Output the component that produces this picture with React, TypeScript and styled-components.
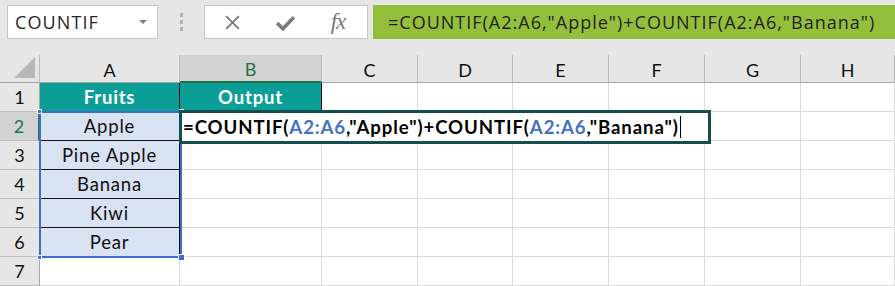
import React from 'react'
import styled, { createGlobalStyle } from 'styled-components'

const GlobalStyle = createGlobalStyle`
  * { box-sizing: border-box; }
  body {
    margin: 0;
    background: #ffffff;
    font-family: Lato, "Noto Sans", sans-serif;
  }
`

const Page = styled.div`
  width: 895px;
  height: 286px;
  overflow: hidden;
  background: #ffffff;
`

const Toolbar = styled.div`
  height: 55px;
  background: #e6e6e6;
  display: flex;
  align-items: flex-start;
  padding: 5px 0 0 7px;
`

const NameBox = styled.div`
  width: 151px;
  height: 34px;
  background: #ffffff;
  border: 1px solid #c6c6c6;
  display: flex;
  align-items: center;
  justify-content: space-between;
  padding: 0 10px 0 7px;
  font-family: "Open Sans", "Noto Sans", sans-serif;
  font-size: 18px;
  letter-spacing: 1.1px;
  color: #262626;
`

const Caret = styled.span`
  width: 0;
  height: 0;
  border-left: 4px solid transparent;
  border-right: 4px solid transparent;
  border-top: 4px solid #808080;
`

const Handle = styled.div`
  width: 46px;
  height: 34px;
  display: flex;
  flex-direction: column;
  align-items: center;
  justify-content: center;
  gap: 3px;
`

const Dot = styled.span`
  width: 3px;
  height: 4px;
  background: #b4b4b4;
`

const ButtonBox = styled.div`
  width: 164px;
  height: 34px;
  background: #ffffff;
  border: 1px solid #c6c6c6;
  display: flex;
  align-items: center;
  justify-content: space-between;
  padding: 0 16px 0 14px;
`

const IconSlot = styled.span`
  width: 26px;
  display: flex;
  align-items: center;
  justify-content: center;
  color: #7a7a7a;
`

const Fx = styled.span`
  font-family: "Liberation Serif", "DejaVu Serif", serif;
  font-style: italic;
  font-size: 23px;
  color: #7a7a7a;
  letter-spacing: -1px;
`

const FormulaBar = styled.div`
  flex: 1;
  height: 34px;
  margin-left: 5px;
  background: #93bf3b;
  display: flex;
  align-items: center;
  padding-left: 15px;
  font-family: "Open Sans", "Noto Sans", sans-serif;
  font-size: 18px;
  letter-spacing: 1px;
  color: #1f1f1f;
  white-space: nowrap;
  overflow: hidden;
`

const Sheet = styled.div`
  position: relative;
  display: grid;
  grid-template-columns: 40px 140px 142px 96px 95px 96px 96px 96px 94px;
  grid-template-rows: 28px repeat(7, 29px);
`

const Corner = styled.div`
  background: #e6e6e6;
  border-right: 1px solid #bdbdbd;
  border-bottom: 1px solid #a6a6a6;
  position: relative;
  &::after {
    content: '';
    position: absolute;
    right: 4px;
    bottom: 4px;
    border-left: 21px solid transparent;
    border-bottom: 21px solid #b8b8b8;
  }
`

const ColHead = styled.div<{ $active?: boolean }>`
  background: ${p => (p.$active ? '#d2d2d2' : '#e6e6e6')};
  color: ${p => (p.$active ? '#217346' : '#111111')};
  border-right: 1px solid #bdbdbd;
  border-bottom: ${p => (p.$active ? '2px solid #217346' : '1px solid #a6a6a6')};
  display: flex;
  align-items: center;
  justify-content: center;
  font-size: 18px;
  padding-top: 2px;
`

const RowHead = styled.div<{ $active?: boolean }>`
  background: ${p => (p.$active ? '#d2d2d2' : '#e6e6e6')};
  color: ${p => (p.$active ? '#217346' : '#111111')};
  border-right: ${p => (p.$active ? '2px solid #217346' : '1px solid #a6a6a6')};
  border-bottom: 1px solid #bdbdbd;
  display: flex;
  align-items: center;
  justify-content: center;
  font-size: 18px;
`

const Cell = styled.div<{ $kind?: 'head' | 'data' | 'plain' }>`
  background: ${p =>
    p.$kind === 'head' ? '#0a9e97' : p.$kind === 'data' ? '#d9e2f3' : '#ffffff'};
  color: ${p => (p.$kind === 'head' ? '#ffffff' : '#111111')};
  font-weight: ${p => (p.$kind === 'head' ? 700 : 400)};
  border-right: 1px solid ${p => (p.$kind === 'plain' ? '#dadada' : '#111111')};
  border-bottom: 1px solid ${p => (p.$kind === 'data' ? '#111111' : p.$kind === 'head' ? '#0a9e97' : '#dadada')};
  display: flex;
  align-items: center;
  justify-content: center;
  font-size: 18.5px;
  letter-spacing: 0.8px;
  white-space: nowrap;
`

const Selection = styled.div`
  position: absolute;
  left: 39px;
  top: 56px;
  width: 143px;
  height: 147px;
  border: 2px solid #3c6fcd;
  pointer-events: none;
`

const Knob = styled.span<{ $x: 'l' | 'r'; $y: 't' | 'b'; $big?: boolean }>`
  position: absolute;
  width: ${p => (p.$big ? 7 : 5)}px;
  height: ${p => (p.$big ? 7 : 5)}px;
  background: #3c6fcd;
  border: 1px solid #ffffff;
  ${p => (p.$x === 'l' ? 'left: -4px;' : `right: ${p.$big ? -5 : -4}px;`)}
  ${p => (p.$y === 't' ? 'top: -4px;' : `bottom: ${p.$big ? -5 : -4}px;`)}
`

const EditBox = styled.div`
  position: absolute;
  left: 179px;
  top: 55px;
  width: 532px;
  height: 34px;
  background: #ffffff;
  border: 3px solid #134f4f;
  display: flex;
  align-items: center;
  padding-left: 1px;
  font-size: 18.6px;
  font-weight: 700;
  letter-spacing: 0.9px;
  color: #000000;
  white-space: nowrap;
  z-index: 2;
`

const Ref = styled.span`
  color: #4472c4;
`

const Cursor = styled.span`
  display: inline-block;
  width: 1px;
  height: 22px;
  background: #000000;
  margin-left: 1px;
  vertical-align: middle;
`

const columns = ['A', 'B', 'C', 'D', 'E', 'F', 'G', 'H']
const fruits = ['Apple', 'Pine Apple', 'Banana', 'Kiwi', 'Pear']

const App = () => {
  const rows = [1, 2, 3, 4, 5, 6, 7]

  return (
    <Page>
      <GlobalStyle />
      <Toolbar>
        <NameBox>
          COUNTIF
          <Caret />
        </NameBox>
        <Handle>
          <Dot />
          <Dot />
          <Dot />
        </Handle>
        <ButtonBox>
          <IconSlot>
            <svg width="17" height="17" viewBox="0 0 16 16">
              <path d="M2 2 L14 14 M14 2 L2 14" stroke="#7a7a7a" strokeWidth="1.7" fill="none" />
            </svg>
          </IconSlot>
          <IconSlot>
            <svg width="21" height="17" viewBox="0 0 20 16">
              <path d="M2 8.5 L7.5 14 L18 3" stroke="#7a7a7a" strokeWidth="3.4" fill="none" />
            </svg>
          </IconSlot>
          <IconSlot>
            <Fx>fx</Fx>
          </IconSlot>
        </ButtonBox>
        <FormulaBar>=COUNTIF(A2:A6,"Apple")+COUNTIF(A2:A6,"Banana")</FormulaBar>
      </Toolbar>

      <Sheet>
        <Corner />
        {columns.map(c => (
          <ColHead key={c} $active={c === 'B'}>{c}</ColHead>
        ))}

        {rows.map(r => (
          <React.Fragment key={r}>
            <RowHead $active={r === 2}>{r}</RowHead>
            {columns.map(c => {
              if (r === 1 && c === 'A') return <Cell key={c} $kind="head">Fruits</Cell>
              if (r === 1 && c === 'B') return <Cell key={c} $kind="head">Output</Cell>
              if (c === 'A' && r >= 2 && r <= 6)
                return <Cell key={c} $kind="data">{fruits[r - 2]}</Cell>
              return <Cell key={c} $kind="plain" />
            })}
          </React.Fragment>
        ))}

        <Selection>
          <Knob $x="l" $y="t" />
          <Knob $x="r" $y="t" />
          <Knob $x="l" $y="b" />
          <Knob $x="r" $y="b" $big />
        </Selection>

        <EditBox>
          =COUNTIF(<Ref>A2:A6</Ref>,"Apple")+COUNTIF(<Ref>A2:A6</Ref>,"Banana")
          <Cursor />
        </EditBox>
      </Sheet>
    </Page>
  )
}

export default App
